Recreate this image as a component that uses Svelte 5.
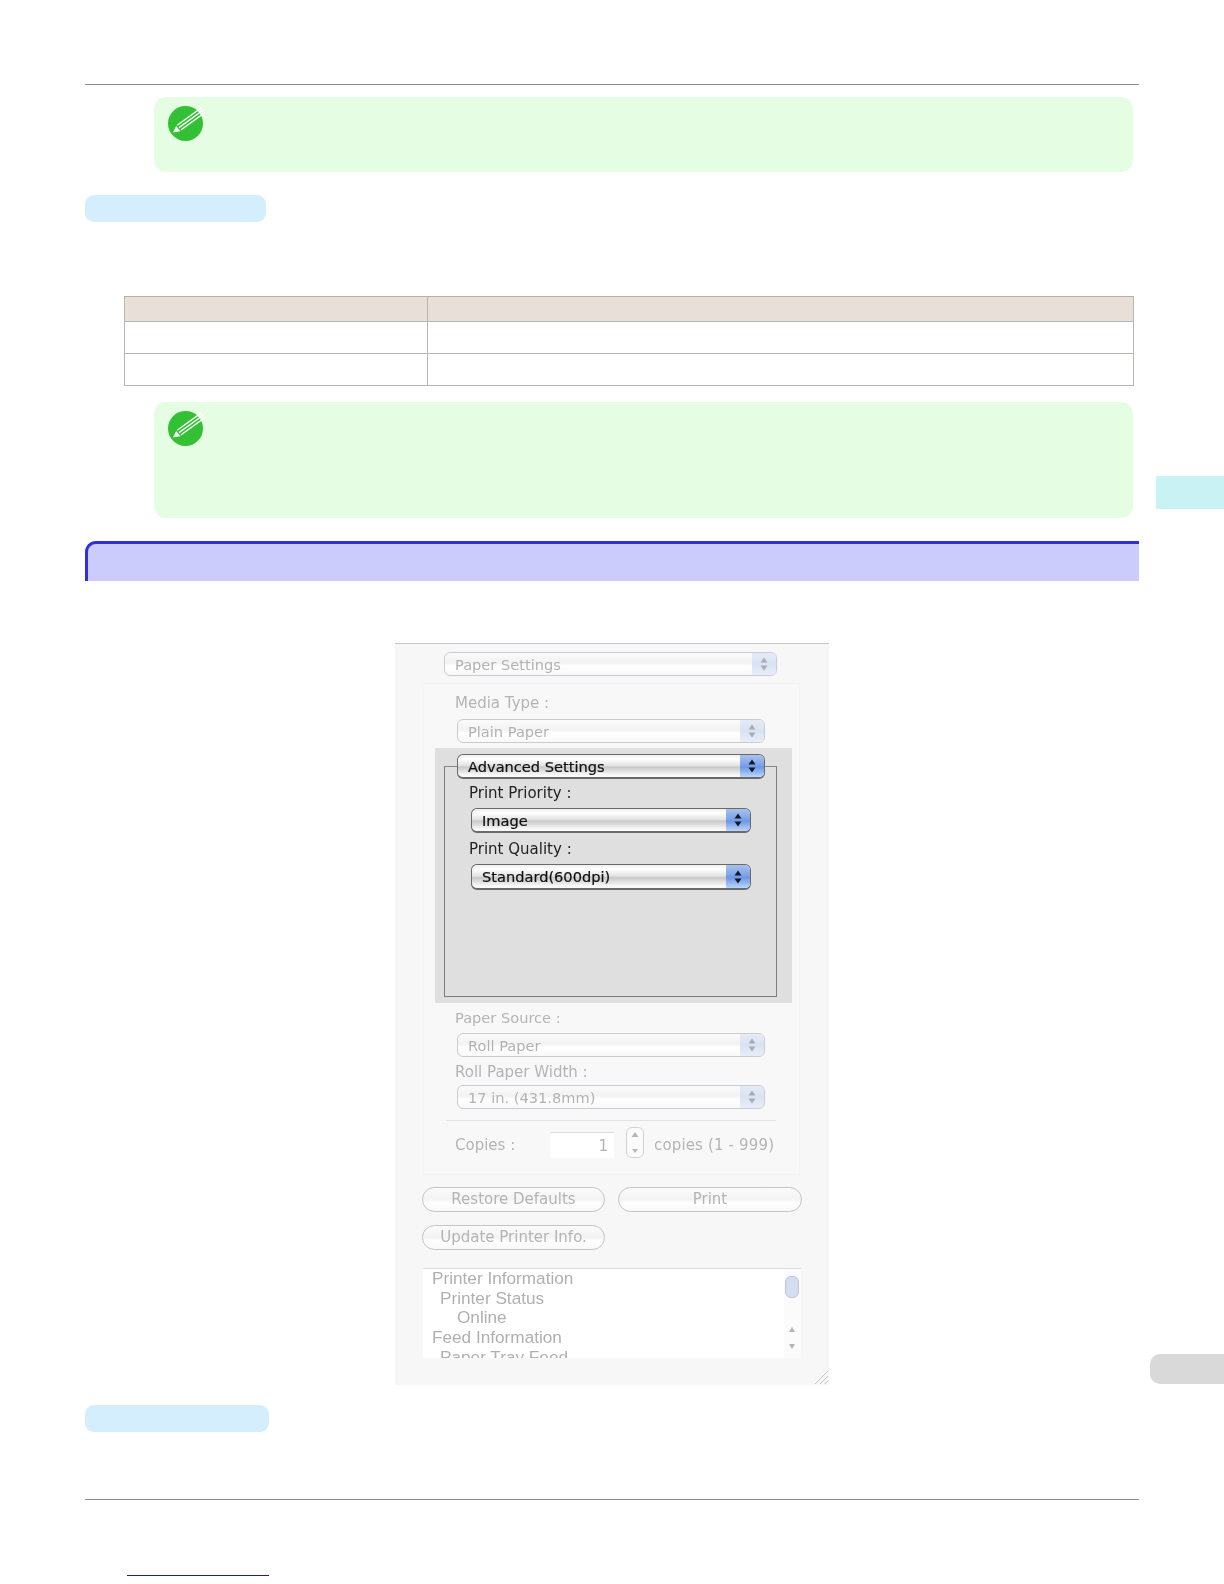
<script>
  const listLines = [
    { text: "Printer Information", level: 0 },
    { text: "Printer Status", level: 1 },
    { text: "Online", level: 2 },
    { text: "Feed Information", level: 0 },
    { text: "Paper Tray Feed", level: 1 },
  ];
</script>

{#snippet noteIcon()}
  <svg class="note-icon" width="40" height="40" viewBox="0 0 40 40">
    <circle cx="19.5" cy="19.5" r="17.5" fill="#34c034" />
    <path d="M7 28.5l3.2-6.6 4.2 5.4z" fill="#fff" />
    <path d="M11.2 21.2L35.6 3.6M13 23.6L37.4 6M14.8 26L39.2 8.4" stroke="#fff" stroke-width="1.3" fill="none" />
  </svg>
{/snippet}

{#snippet arrows(color)}
  <svg width="10" height="16" viewBox="0 0 10 16">
    <path d="M5 1.5L8.5 6.5H1.5zM5 14.5L1.5 9.5H8.5z" fill={color} />
  </svg>
{/snippet}

{#snippet popup(label, cls, active)}
  <div class="popup {cls}" class:active>
    <span class="popup-label">{label}</span>
    <span class="popup-arrows">{@render arrows(active ? "#10182c" : "#a8adb4")}</span>
  </div>
{/snippet}

<div class="page">
  <div class="rule"></div>

  <div class="note note-a">{@render noteIcon()}</div>
  <div class="pill pill-a"></div>

  <table class="info">
    <thead>
      <tr><th class="col-a"></th><th></th></tr>
    </thead>
    <tbody>
      <tr><td></td><td></td></tr>
      <tr><td></td><td></td></tr>
    </tbody>
  </table>

  <div class="note note-b">{@render noteIcon()}</div>
  <div class="heading"></div>

  <div class="dialog">
    {@render popup("Paper Settings", "top-select", false)}

    <div class="panel">
      <div class="label dim media-label">Media Type :</div>
      {@render popup("Plain Paper", "wide plain", false)}

      <div class="focus-block">
        <div class="group">
          {@render popup("Advanced Settings", "wide advanced", true)}
          <div class="label inner first">Print Priority :</div>
          {@render popup("Image", "narrow image", true)}
          <div class="label inner second">Print Quality :</div>
          {@render popup("Standard(600dpi)", "narrow standard", true)}
        </div>
      </div>

      <div class="label dim source-label">Paper Source :</div>
      {@render popup("Roll Paper", "wide roll", false)}
      <div class="label dim width-label">Roll Paper Width :</div>
      {@render popup("17 in. (431.8mm)", "wide width", false)}

      <div class="separator"></div>

      <div class="copies">
        <span class="copies-label">Copies :</span>
        <span class="copies-input">1</span>
        <span class="stepper">
          <svg width="10" height="27" viewBox="0 0 10 27">
            <path d="M5 3L8.5 8H1.5zM5 24L2 20H8z" fill="#b4b8bc" />
          </svg>
        </span>
        <span class="copies-range">copies (1 - 999)</span>
      </div>
    </div>

    <div class="buttons">
      <div class="btn">Restore Defaults</div>
      <div class="btn">Print</div>
      <div class="btn">Update Printer Info.</div>
    </div>

    <div class="listbox">
      <div class="list-lines">
        {#each listLines as line}
          <div class="list-line level-{line.level}">{line.text}</div>
        {/each}
      </div>
      <div class="scrollbar">
        <div class="thumb"></div>
        <svg class="scroll-arrows" width="10" height="26" viewBox="0 0 10 26">
          <path d="M5 2L8 7H2zM5 24L2 19H8z" fill="#b0b4b8" />
        </svg>
      </div>
    </div>

    <svg class="grip" width="16" height="16" viewBox="0 0 16 16">
      <path d="M2 15L15 2M7 15L15 7M11.5 15L15 11.5" stroke="#c4c4c4" stroke-width="1" fill="none" />
    </svg>
  </div>

  <div class="pill pill-b"></div>
  <div class="rule rule-bottom"></div>
  <div class="page-link"></div>

  <div class="tab tab-chapter"></div>
  <div class="tab tab-page"></div>
</div>

<style>
  :global(body) {
    margin: 0;
    background: #fff;
  }

  .page {
    position: relative;
    width: 1224px;
    height: 1584px;
    padding: 84px 0 0 85px;
    box-sizing: border-box;
    overflow: hidden;
    font-family: "DejaVu Sans", sans-serif;
  }

  .rule {
    width: 1054px;
    height: 1px;
    background: #8c8c8c;
  }

  .note {
    margin-left: 69px;
    width: 979px;
    box-sizing: border-box;
    padding: 7px 0 0 12px;
    background: #e5fde3;
    border-radius: 12px;
  }

  .note-a {
    margin-top: 12px;
    height: 75px;
  }

  .note-b {
    margin-top: 16px;
    height: 116px;
  }

  .note-icon {
    display: block;
  }

  .pill {
    height: 27px;
    background: #d4eefe;
    border-radius: 9px;
  }

  .pill-a {
    margin-top: 23px;
    width: 181px;
  }

  .pill-b {
    margin-top: 20px;
    width: 184px;
  }

  .info {
    margin: 74px 0 0 39px;
    width: 1010px;
    border-collapse: collapse;
    table-layout: fixed;
  }

  .info th,
  .info td {
    padding: 0;
    border: 1px solid #b9b5b1;
  }

  .info th {
    height: 24px;
    background: #e8dfd9;
    border-top-color: #b8aea4;
  }

  .info td {
    height: 31px;
  }

  .col-a {
    width: 302px;
  }

  .heading {
    margin-top: 23px;
    width: 1054px;
    height: 40px;
    box-sizing: border-box;
    background: #ccccfc;
    border: 3px solid #3030d4;
    border-width: 3px 0 0 3px;
    border-top-left-radius: 11px;
  }

  .dialog {
    position: relative;
    margin: 62px 0 0 310px;
    width: 434px;
    height: 742px;
    box-sizing: border-box;
    padding-top: 8px;
    background: #f7f7f7;
    border-top: 1px solid #c6c6c6;
    filter: blur(0.5px);
  }

  .popup {
    display: flex;
    align-items: center;
    justify-content: space-between;
    box-sizing: border-box;
    height: 24px;
    padding-left: 10px;
    border: 1px solid #c9cdd2;
    border-radius: 6px;
    background: linear-gradient(#fbfbfb, #f2f2f2 45%, #fff 60%, #f8f8f8);
    font-size: 14.6px;
    color: #b2b2b2;
    overflow: hidden;
  }

  .popup.active {
    border-color: #6a6a6a;
    border-bottom-width: 2px;
    background: linear-gradient(#efefef, #ffffff 18%, #e2e2e2 48%, #c8c8c8 55%, #fafafa 92%);
    color: #101010;
    -webkit-text-stroke: 0.2px #101010;
  }

  .popup-arrows {
    display: flex;
    align-items: center;
    justify-content: center;
    align-self: stretch;
    width: 24px;
    background: linear-gradient(#e4ebf5, #d8e3f3 50%, #e6eef8);
  }

  .active .popup-arrows {
    background: linear-gradient(#a9c1ee, #7da3e8 45%, #6c98e6 55%, #bcd6fa);
  }

  .top-select {
    margin-left: 49px;
    width: 333px;
  }

  .wide {
    margin-left: 33px;
    width: 308px;
  }

  .narrow {
    margin-left: 26px;
    width: 280px;
    height: 25px;
  }

  .plain {
    margin-top: 6px;
  }

  .roll {
    margin-top: 5px;
  }

  .width {
    margin-top: 3px;
  }

  .panel {
    margin: 7px 0 0 28px;
    width: 377px;
    height: 492px;
    box-sizing: border-box;
    border: 1px solid #f4f4f4;
    background: #f8f8f8;
  }

  .label {
    height: 20px;
    line-height: 20px;
    font-size: 15px;
    color: #222;
  }

  .dim {
    margin-left: 31px;
    color: #b4b4b4;
  }

  .media-label {
    margin-top: 9px;
  }

  .source-label {
    margin-top: 5px;
    font-size: 14.6px;
  }

  .width-label {
    margin-top: 5px;
  }

  .focus-block {
    margin: 5px 0 0 11px;
    width: 357px;
    height: 255px;
    padding: 18px 0 0 9px;
    box-sizing: border-box;
    background: #dfdfdf;
  }

  .group {
    width: 333px;
    height: 231px;
    box-sizing: border-box;
    border: 1px solid #7c7c7c;
    border-top-color: #888;
  }

  .advanced {
    margin: -13px 0 0 12px;
    height: 25px;
  }

  .inner {
    margin-left: 24px;
  }

  .first {
    margin-top: 4px;
  }

  .second {
    margin-top: 6px;
  }

  .image {
    margin-top: 5px;
  }

  .standard {
    margin-top: 5px;
    height: 26px;
  }

  .separator {
    margin: 11px 0 0 22px;
    width: 330px;
    height: 1px;
    background: #e2e2e2;
  }

  .copies {
    display: flex;
    align-items: center;
    margin: 6px 0 0 31px;
    height: 31px;
    font-size: 15px;
    color: #b4b4b4;
    white-space: nowrap;
  }

  .copies-label {
    width: 95px;
    padding-top: 4px;
  }

  .copies-input {
    width: 64px;
    height: 26px;
    margin-top: 5px;
    box-sizing: border-box;
    padding-right: 6px;
    line-height: 27px;
    text-align: right;
    background: #fff;
    border-top: 1px solid #dcdcdc;
  }

  .stepper {
    display: flex;
    align-items: center;
    justify-content: center;
    margin-left: 12px;
    width: 18px;
    height: 31px;
    box-sizing: border-box;
    background: #fbfbfb;
    border: 1px solid #d2d2d2;
    border-radius: 6px;
  }

  .copies-range {
    margin-left: 10px;
    padding-top: 4px;
    letter-spacing: 0.15px;
  }

  .buttons {
    display: grid;
    grid-template-columns: 183px 184px;
    grid-auto-rows: 25px;
    gap: 13px;
    margin: 12px 0 0 27px;
  }

  .btn {
    box-sizing: border-box;
    border: 1px solid #c4c4c4;
    border-radius: 13px;
    background: linear-gradient(#fbfbfb, #f3f3f3 50%, #fff 65%, #f8f8f8);
    text-align: center;
    line-height: 23px;
    font-size: 15px;
    color: #b4b4b4;
  }

  .listbox {
    display: flex;
    margin: 18px 0 0 28px;
    width: 378px;
    height: 90px;
    box-sizing: border-box;
    background: #fff;
    border-top: 1px solid #dcdcdc;
    overflow: hidden;
  }

  .list-lines {
    flex: 1;
    padding: 0 0 0 9px;
    font-family: "Liberation Sans", sans-serif;
    font-size: 17.2px;
    color: #b0b0b0;
  }

  .list-line {
    height: 19.7px;
    line-height: 19.7px;
    white-space: nowrap;
  }

  .level-1 {
    padding-left: 8px;
  }

  .level-2 {
    padding-left: 25px;
  }

  .scrollbar {
    position: relative;
    width: 17px;
    background: #fbfbfb;
  }

  .thumb {
    margin: 7px 0 0 1px;
    width: 14px;
    height: 22px;
    box-sizing: border-box;
    background: #d4deee;
    border: 1px solid #bcc8da;
    border-radius: 6px;
  }

  .scroll-arrows {
    position: absolute;
    left: 3px;
    bottom: 7px;
  }

  .grip {
    position: absolute;
    right: 0;
    bottom: 0;
  }

  .rule-bottom {
    margin-top: 67px;
  }

  .page-link {
    margin: 75px 0 0 42px;
    width: 142px;
    height: 1px;
    background: #1c1ca4;
  }

  .tab {
    position: absolute;
    right: 0;
  }

  .tab-chapter {
    top: 476px;
    width: 68px;
    height: 33px;
    background: #c8f2f4;
  }

  .tab-page {
    top: 1354px;
    width: 74px;
    height: 30px;
    background: #d9d9d9;
    border-radius: 10px 0 0 10px;
  }
</style>
